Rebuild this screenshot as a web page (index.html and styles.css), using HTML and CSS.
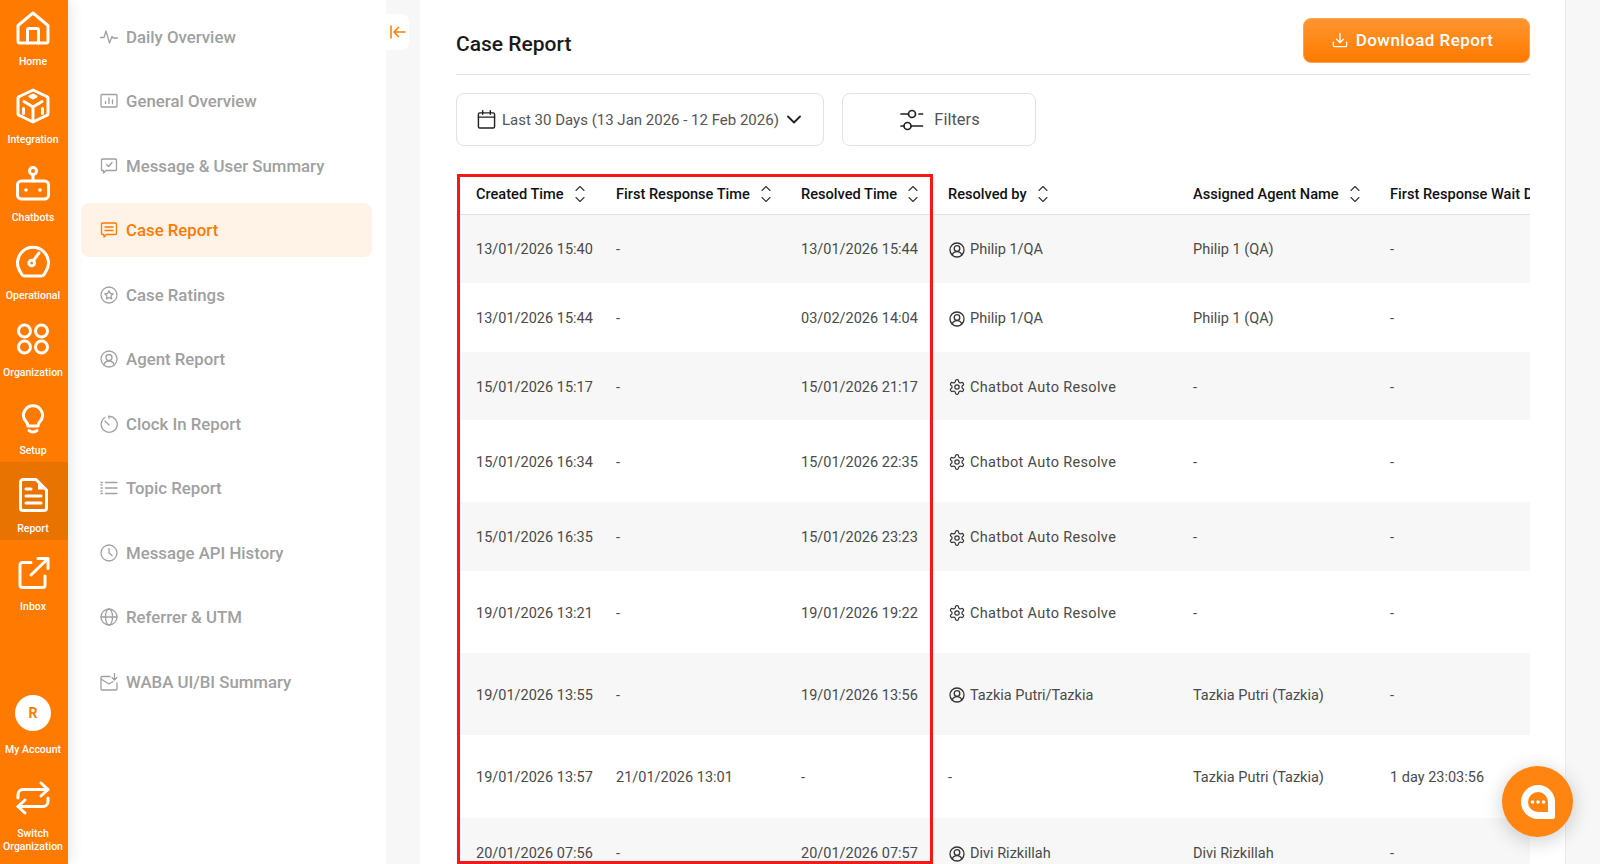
FILE: index.html
```html
<!DOCTYPE html>
<html lang="en">
<head>
<meta charset="utf-8">
<title>Case Report</title>
<link rel="stylesheet" href="styles.css">
</head>
<body>
<div class="app">
  <nav class="rail">
    <div class="rail-top">
      <a class="rail-item"><svg class="rail-icon" viewBox="0 0 36 36"><path d="M3 15.500 18 3l15 12.500V31a2 2 0 0 1-2 2H5a2 2 0 0 1-2-2Z"/><path d="M12.500 33V20a1.500 1.500 0 0 1 1.500-1.500h8a1.500 1.500 0 0 1 1.500 1.500v13"/></svg><span>Home</span></a>
      <a class="rail-item"><svg class="rail-icon" viewBox="0 0 36 36"><path d="M18 2 31.500 8.500A2 2 0 0 1 33 10.500v15a2 2 0 0 1-1.500 2L18 34 4.500 27.500a2 2 0 0 1-1.500-2v-15a2 2 0 0 1 1.500-2Z"/><path d="M9 13.500 18 19l9-5.500M18 19v14"/><path d="M15 8.500 18 7l3 1.500L18 10ZM8.500 20.500v5M27.500 20.500v5"/></svg><span>Integration</span></a>
      <a class="rail-item"><svg class="rail-icon" viewBox="0 0 36 36"><circle cx="18" cy="5" r="3.500"/><path d="M18 8.500V15"/><rect x="2.500" y="15" width="31" height="18" rx="4"/><circle class="fill" cx="11" cy="24" r="1.800"/><circle class="fill" cx="25" cy="24" r="1.800"/></svg><span>Chatbots</span></a>
      <a class="rail-item"><svg class="rail-icon" viewBox="0 0 36 36"><path d="M10 32Q7 32 5.500 28A15.500 15.500 0 1 1 30.500 28Q29 32 26 32Z"/><circle cx="16.700" cy="19" r="2.800"/><path d="M18.500 16.500 24 9"/></svg><span>Operational</span></a>
      <a class="rail-item"><svg class="rail-icon" viewBox="0 0 36 36"><circle cx="9.500" cy="10" r="6"/><circle cx="26.500" cy="10" r="6"/><circle cx="9.500" cy="26" r="6"/><circle cx="26.500" cy="26" r="6"/></svg><span>Organization</span></a>
      <a class="rail-item"><svg class="rail-icon" viewBox="0 0 36 36"><path d="M13 27c0-3-2-4.500-3.500-6.500A9.500 9.500 0 1 1 26.500 20.500C25 22.500 23 24 23 27Z"/><path d="M14 31.500c2 2 6 2 8 0"/></svg><span>Setup</span></a>
      <a class="rail-item active"><svg class="rail-icon" viewBox="0 0 36 36"><path d="M8 2.500h13L31.500 13v18a2.500 2.500 0 0 1-2.500 2.500H8A2.500 2.500 0 0 1 5.500 31V5A2.500 2.500 0 0 1 8 2.500Z"/><path class="fill" d="M23 6l6 6.500h-6Z"/><path d="M11 12h5M11 19h15M11 26h15"/></svg><span>Report</span></a>
      <a class="rail-item"><svg class="rail-icon" viewBox="0 0 36 36"><path d="M30 21v9a2.500 2.500 0 0 1-2.500 2.500h-20A2.500 2.500 0 0 1 5 30V10a2.500 2.500 0 0 1 2.500-2.500H16"/><path d="M23 3.500h10v10M33 3.500 16 20"/></svg><span>Inbox</span></a>
    </div>
    <div class="rail-bottom">
      <a class="rail-account"><span class="avatar">R</span><span>My Account</span></a>
      <a class="rail-switch"><svg class="rail-icon" viewBox="0 0 36 36"><path d="m26 3 7 6.500-7 6.500"/><path d="M33 9.500H8a5 5 0 0 0-5 5V18"/><path d="m10 33-7-6.500 7-6.500"/><path d="M3 26.500h25a5 5 0 0 0 5-5V18"/></svg><span>Switch<br>Organization</span></a>
    </div>
  </nav>

  <aside class="side">
    <a class="side-item"><svg class="side-icon" viewBox="0 0 18 18"><path d="M.5 9.500h3.500l2-6.500 3.500 12 2.500-6.500 1.200 1.500h4.500"/></svg>Daily Overview</a>
    <a class="side-item"><svg class="side-icon" viewBox="0 0 18 18"><rect x="1" y="2.500" width="16" height="12.500" rx="1"/><path d="M5.500 11.500v-2M9 11.500V6M12.500 11.500V8"/></svg>General Overview</a>
    <a class="side-item"><svg class="side-icon" viewBox="0 0 18 18"><path d="M2.500 2h13a1 1 0 0 1 1 1v9.500a1 1 0 0 1-1 1H6l-2.500 2.500v-2.500h-1a1 1 0 0 1-1-1V3a1 1 0 0 1 1-1Z"/><path d="m6.500 7.500 2 2 3.500-4"/></svg>Message &amp; User Summary</a>
    <a class="side-item current"><svg class="side-icon" viewBox="0 0 18 18"><path d="M2.500 2h13a1 1 0 0 1 1 1v9.500a1 1 0 0 1-1 1H6.500l-2.500 2.500v-2.500H2.500a1 1 0 0 1-1-1V3a1 1 0 0 1 1-1Z"/><path d="M5 6h8M5 9.500h8"/></svg>Case Report</a>
    <a class="side-item"><svg class="side-icon" viewBox="0 0 18 18"><circle cx="9" cy="9" r="8"/><path d="m9 4.800 1.300 2.700 2.900.4-2.100 2 .5 2.900L9 11.500l-2.600 1.300.5-2.900-2.100-2 2.900-.4Z"/></svg>Case Ratings</a>
    <a class="side-item"><svg class="side-icon" viewBox="0 0 18 18"><circle cx="9" cy="9" r="8"/><circle cx="9" cy="7.500" r="3"/><path d="M3.800 15c.6-2.500 2.700-4 5.200-4s4.600 1.500 5.200 4"/></svg>Agent Report</a>
    <a class="side-item"><svg class="side-icon" viewBox="0 0 18 18"><path d="M5 2.500a8 8 0 1 0 4-1.200"/><path d="M5 6l4 4M9 1v2.500"/></svg>Clock In Report</a>
    <a class="side-item"><svg class="side-icon" viewBox="0 0 18 18"><path d="M5.500 3.500H17M5.500 9H17M5.500 14.500H17"/><path class="dash" d="M1 3.500h1.500M1 6h1M1 9h1.500M1 12h1M1 14.500h1.500"/></svg>Topic Report</a>
    <a class="side-item"><svg class="side-icon" viewBox="0 0 18 18"><circle cx="9" cy="9" r="8"/><path d="M9 4.500V9l3 2.500"/></svg>Message API History</a>
    <a class="side-item"><svg class="side-icon" viewBox="0 0 18 18"><circle cx="9" cy="9" r="8"/><ellipse cx="9" cy="9" rx="3.500" ry="8"/><path d="M1 9h16"/></svg>Referrer &amp; UTM</a>
    <a class="side-item"><svg class="side-icon" viewBox="0 0 18 18"><path d="M10 3.500H2a1 1 0 0 0-1 1V16a1 1 0 0 0 1 1h14a1 1 0 0 0 1-1v-6"/><path d="m1 6 8 5 4-2.500"/><path d="M14.500 0v6.500M12 4.500l2.500 2.500L17 4.500"/></svg>WABA UI/BI Summary</a>
  </aside>

  <div class="gutter">
    <button class="collapse" type="button"><svg viewBox="0 0 16 14"><path d="M1 1v12M15 7H4M8.500 2.500 4 7l4.500 4.500"/></svg></button>
  </div>

  <main class="panel">
    <header class="head">
      <h1>Case Report</h1>
      <button class="download" type="button"><svg viewBox="0 0 18 18"><path d="M9 1.500v10M5 8l4 4 4-4M1.500 11.500V15a1.500 1.500 0 0 0 1.500 1.500h12a1.500 1.500 0 0 0 1.500-1.500v-3.500"/></svg>Download Report</button>
    </header>
    <div class="filters">
      <button class="control date" type="button"><svg class="cal" viewBox="0 0 20 20"><rect x="1.500" y="3" width="17" height="16" rx="1.500"/><path d="M1.500 7.500h17M6 .8V4.500M14 .8V4.500"/></svg><span>Last 30 Days (13 Jan 2026 - 12 Feb 2026)</span><svg class="chev" viewBox="0 0 14 9"><path d="m1 1.500 6 6 6-6"/></svg></button>
      <button class="control filter" type="button"><svg class="sliders" viewBox="0 0 24 22"><circle cx="12" cy="5" r="3.500"/><circle cx="7.500" cy="17" r="3.500"/><path d="M1 5h7.500M19 5h3.500M11 17h11.500M1 17h3"/></svg><span>Filters</span></button>
    </div>
    <div class="table-wrap">
      <table>
        <colgroup><col class="c1"><col class="c2"><col class="c3"><col class="c4"><col class="c5"><col class="c6"></colgroup>
        <thead>
          <tr>
            <th><span class="th">Created Time<svg class="sort" viewBox="0 0 10 18"><path d="m1 5.500 4-4 4 4M1 12.500l4 4 4-4"/></svg></span></th>
            <th><span class="th">First Response Time<svg class="sort" viewBox="0 0 10 18"><path d="m1 5.500 4-4 4 4M1 12.500l4 4 4-4"/></svg></span></th>
            <th><span class="th">Resolved Time<svg class="sort" viewBox="0 0 10 18"><path d="m1 5.500 4-4 4 4M1 12.500l4 4 4-4"/></svg></span></th>
            <th><span class="th">Resolved by<svg class="sort" viewBox="0 0 10 18"><path d="m1 5.500 4-4 4 4M1 12.500l4 4 4-4"/></svg></span></th>
            <th><span class="th">Assigned Agent Name<svg class="sort" viewBox="0 0 10 18"><path d="m1 5.500 4-4 4 4M1 12.500l4 4 4-4"/></svg></span></th>
            <th>First Response Wait Duration</th>
          </tr>
        </thead>
        <tbody>
          <tr class="r69 odd"><td>13/01/2026 15:40</td><td>-</td><td>13/01/2026 15:44</td><td><span class="who"><svg viewBox="0 0 16 16"><use href="#user"/></svg>Philip 1/QA</span></td><td>Philip 1 (QA)</td><td>-</td></tr>
          <tr class="r69"><td>13/01/2026 15:44</td><td>-</td><td>03/02/2026 14:04</td><td><span class="who"><svg viewBox="0 0 16 16"><use href="#user"/></svg>Philip 1/QA</span></td><td>Philip 1 (QA)</td><td>-</td></tr>
          <tr class="r68 odd"><td>15/01/2026 15:17</td><td>-</td><td>15/01/2026 21:17</td><td><span class="who bot"><svg viewBox="0 0 16 16"><use href="#gear"/></svg>Chatbot Auto Resolve</span></td><td>-</td><td>-</td></tr>
          <tr class="r82"><td>15/01/2026 16:34</td><td>-</td><td>15/01/2026 22:35</td><td><span class="who bot"><svg viewBox="0 0 16 16"><use href="#gear"/></svg>Chatbot Auto Resolve</span></td><td>-</td><td>-</td></tr>
          <tr class="r69 odd"><td>15/01/2026 16:35</td><td>-</td><td>15/01/2026 23:23</td><td><span class="who bot"><svg viewBox="0 0 16 16"><use href="#gear"/></svg>Chatbot Auto Resolve</span></td><td>-</td><td>-</td></tr>
          <tr class="r82"><td>19/01/2026 13:21</td><td>-</td><td>19/01/2026 19:22</td><td><span class="who bot"><svg viewBox="0 0 16 16"><use href="#gear"/></svg>Chatbot Auto Resolve</span></td><td>-</td><td>-</td></tr>
          <tr class="r82 odd"><td>19/01/2026 13:55</td><td>-</td><td>19/01/2026 13:56</td><td><span class="who"><svg viewBox="0 0 16 16"><use href="#user"/></svg>Tazkia Putri/Tazkia</span></td><td>Tazkia Putri (Tazkia)</td><td>-</td></tr>
          <tr class="r83"><td>19/01/2026 13:57</td><td>21/01/2026 13:01</td><td>-</td><td>-</td><td>Tazkia Putri (Tazkia)</td><td>1 day 23:03:56</td></tr>
          <tr class="r69 odd"><td>20/01/2026 07:56</td><td>-</td><td>20/01/2026 07:57</td><td><span class="who"><svg viewBox="0 0 16 16"><use href="#user"/></svg>Divi Rizkillah</span></td><td>Divi Rizkillah</td><td>-</td></tr>
        </tbody>
      </table>
    </div>
  </main>
  <div class="outer"></div>
</div>

<div class="highlight"></div>
<button class="chat" type="button"><svg viewBox="0 0 34 34"><path class="bubble" d="M17 0a17 17 0 0 0 0 34h15a2 2 0 0 0 2-2V17A17 17 0 0 0 17 0Z"/><path class="hole" d="M17 7a10 10 0 0 0 0 20h10V17A10 10 0 0 0 17 7Z"/><circle class="dot" cx="11.500" cy="17" r="1.800"/><circle class="dot" cx="17" cy="17" r="1.800"/><circle class="dot" cx="22.500" cy="17" r="1.800"/></svg></button>

<svg class="defs" width="0" height="0" aria-hidden="true">
  <symbol id="user" viewBox="0 0 16 16"><g class="ico"><circle cx="8" cy="8" r="7"/><circle cx="8" cy="6.500" r="2.800"/><path d="M3.300 13c.6-2 2.400-3.300 4.700-3.300s4.100 1.300 4.700 3.300"/></g></symbol>
  <symbol id="gear" viewBox="1 1 22 22"><g class="ico gear"><path d="M12.220 2h-.44a2 2 0 0 0-2 2v.18a2 2 0 0 1-1 1.730l-.43.25a2 2 0 0 1-2 0l-.15-.08a2 2 0 0 0-2.730.73l-.22.380a2 2 0 0 0 .73 2.730l.15.100a2 2 0 0 1 1 1.720v.510a2 2 0 0 1-1 1.740l-.15.090a2 2 0 0 0-.73 2.730l.22.380a2 2 0 0 0 2.730.730l.15-.080a2 2 0 0 1 2 0l.43.250a2 2 0 0 1 1 1.730V20a2 2 0 0 0 2 2h.44a2 2 0 0 0 2-2v-.18a2 2 0 0 1 1-1.730l.43-.25a2 2 0 0 1 2 0l.15.080a2 2 0 0 0 2.730-.730l.22-.390a2 2 0 0 0-.73-2.730l-.15-.080a2 2 0 0 1-1-1.740v-.500a2 2 0 0 1 1-1.740l.15-.090a2 2 0 0 0 .73-2.730l-.22-.380a2 2 0 0 0-2.730-.730l-.15.080a2 2 0 0 1-2 0l-.43-.250a2 2 0 0 1-1-1.730V4a2 2 0 0 0-2-2Z"/><circle cx="12" cy="12" r="3"/></g></symbol>
</svg>
</body>
</html>
```

FILE: styles.css
```css
* { box-sizing: border-box; }
html, body { margin: 0; height: 100%; overflow: hidden; }
body { font-family: Roboto, "Liberation Sans", sans-serif; background: #f7f7f7; color: #444; }
button { font: inherit; cursor: pointer; }
.app { display: flex; height: 864px; overflow: hidden; }

.rail { width: 68px; flex: none; background: #ff7a00; color: #fff; display: flex; flex-direction: column; justify-content: space-between; box-shadow: 0 0 16px rgba(0,0,0,.12); position: relative; z-index: 2; font-size: 10.500px; font-weight: 500; overflow: hidden; }
.rail-top { margin-top: -5px; }
.rail-item { height: 77.850px; padding: 15px 2px 0 0; display: flex; flex-direction: column; align-items: center; }
.rail-item.active { background: #e87300; }
.rail-item span { margin-top: 9px; line-height: 14px; white-space: nowrap; }
.rail-icon { width: 36px; height: 36px; flex: none; fill: none; stroke: #fff; stroke-width: 3; stroke-linecap: round; stroke-linejoin: round; }
.rail-icon .fill { fill: #fff; stroke: none; }
.rail-bottom { display: flex; flex-direction: column; align-items: center; padding: 0 2px 11px 0; }
.rail-account, .rail-switch { display: flex; flex-direction: column; align-items: center; text-align: center; white-space: nowrap; line-height: 13px; }
.avatar { width: 36px; height: 36px; border-radius: 50%; background: #fff; color: #ff7a00; font-size: 14px; font-weight: 700; display: flex; align-items: center; justify-content: center; margin-bottom: 12px; }
.rail-switch { margin-top: 24px; }
.rail-switch .rail-icon { margin-bottom: 11px; }

.side { width: 318px; flex: none; background: #fff; padding: 9.500px 14px 0 13px; display: flex; flex-direction: column; gap: 10.500px; }
.side-item { height: 54px; flex: none; border-radius: 8px; padding-left: 19px; display: flex; align-items: center; gap: 8px; font-size: 16.800px; font-weight: 500; color: #a0a0a0; }
.side-item.current { background: #fff3e8; color: #ff7a00; }
.side-icon { width: 18px; height: 18px; flex: none; fill: none; stroke: currentColor; stroke-width: 1.300; stroke-linecap: round; stroke-linejoin: round; }

.gutter { width: 34px; flex: none; }
.collapse { width: 23px; height: 36px; margin-top: 14px; padding: 0; border: 0; border-radius: 0 8px 8px 0; background: #fff; display: flex; align-items: center; justify-content: center; }
.collapse svg { width: 16px; height: 14px; fill: none; stroke: #ff7a00; stroke-width: 1.500; stroke-linecap: round; stroke-linejoin: round; }

.panel { width: 1146px; flex: none; height: 864px; background: #fff; border-right: 1px solid #ececec; padding: 18px 35px 0 36px; overflow: hidden; }
.outer { flex: 1; }
.head { height: 57px; padding-bottom: 12px; border-bottom: 1px solid #e2e2e2; display: flex; align-items: center; justify-content: space-between; }
.head h1 { margin: 7px 0 0; font-size: 21px; font-weight: 500; color: #1a1a1a; }
.download { width: 227px; height: 45px; padding: 0 8px 0 0; border: 1px solid #ffa552; border-radius: 8px; background: linear-gradient(#ff952e, #ff7a00); color: #fff; font-size: 17px; font-weight: 500; display: flex; align-items: center; justify-content: center; gap: 8px; letter-spacing: .45px; }
.download svg { width: 16px; height: 16px; fill: none; stroke: #fff; stroke-width: 1.500; stroke-linecap: round; stroke-linejoin: round; }

.filters { display: flex; gap: 18px; margin-top: 18px; }
.control { height: 53px; background: #fff; border: 1px solid #e2e2e2; border-radius: 8px; display: flex; align-items: center; color: #555; font-size: 15px; }
.date { width: 368px; padding: 0 0 0 20px; gap: 6px; }
.filter { width: 194px; justify-content: center; gap: 10px; font-size: 16.500px; }
.cal { width: 19px; height: 19px; fill: none; stroke: #222; stroke-width: 1.500; stroke-linecap: round; }
.chev { width: 14px; height: 9px; margin-left: 2px; fill: none; stroke: #222; stroke-width: 1.800; stroke-linecap: round; stroke-linejoin: round; }
.sliders { width: 24px; height: 22px; margin-left: 2px; fill: none; stroke: #222; stroke-width: 1.700; stroke-linecap: round; }

.table-wrap { margin-top: 28px; width: 1074px; overflow: hidden; }
table { width: 1214px; table-layout: fixed; border-collapse: collapse; font-size: 14.500px; }
.c1 { width: 140px; } .c2 { width: 185px; } .c3 { width: 147px; } .c4 { width: 245px; } .c5 { width: 197px; } .c6 { width: 300px; }
th { height: 40px; padding: 0 0 0 20px; text-align: left; font-size: 14.600px; font-weight: 500; color: #111; border-bottom: 1px solid #e2e2e2; white-space: nowrap; }
td { padding: 2px 0 0 20px; color: #4a4a4a; white-space: nowrap; }
.th { display: flex; align-items: center; gap: 11px; }
.sort { width: 10px; height: 18px; flex: none; fill: none; stroke: #333; stroke-width: 1.100; stroke-linecap: round; stroke-linejoin: round; }
tr.odd { background: #f7f7f7; }
.r68 { height: 68px; } .r69 { height: 69px; } .r82 { height: 82px; } .r83 { height: 83px; }
.who { display: flex; align-items: center; gap: 5px; margin-left: 1px; }
.who.bot { letter-spacing: .35px; }
.who svg { width: 16px; height: 16px; flex: none; }
.ico { fill: none; stroke: #333; stroke-width: 1.300; stroke-linecap: round; stroke-linejoin: round; }
.gear { stroke-width: 1.700; }
.defs { position: absolute; }

.highlight { position: absolute; left: 457px; top: 174px; width: 476px; height: 690px; border: 3px solid #f51818; pointer-events: none; }
.chat { position: absolute; left: 1502px; top: 766px; width: 71px; height: 71px; padding: 0; border: 0; border-radius: 50%; background: #ff8410; box-shadow: 0 4px 20px rgba(0,0,0,.2); display: flex; align-items: center; justify-content: center; }
.chat svg { width: 34px; height: 34px; }
.bubble { fill: #fff; }
.hole { fill: #ff8410; }
.dot { fill: #fff; }
```
